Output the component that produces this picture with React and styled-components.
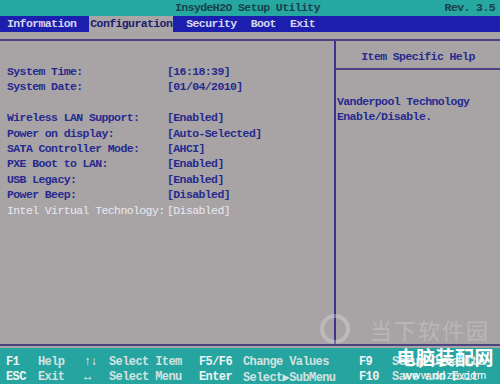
import React from "react";
import styled, { createGlobalStyle } from "styled-components";

const Global = createGlobalStyle`
  html, body { margin: 0; padding: 0; background: #a8a4a5; }
  body { width: 500px; height: 384px; overflow: hidden; }
  #root { width: 500px; height: 384px; }
`;

const font = `"Liberation Mono", "DejaVu Sans Mono", monospace`;

const Screen = styled.div`
  position: relative;
  width: 500px;
  height: 384px;
  display: flex;
  flex-direction: column;
  background: #a8a4a5;
  font-family: ${font};
  font-size: 11.5px;
  font-weight: bold;
  letter-spacing: -0.6px;
  overflow: hidden;
`;

const TitleBar = styled.div`
  height: 16px;
  background: #27a7a1;
  color: #17424a;
  display: grid;
  grid-template-columns: 1fr auto 1fr;
  align-items: center;
  padding: 0 5px 0 0;
  line-height: 16px;
`;

const Title = styled.span`
  grid-column: 2;
`;

const Rev = styled.span`
  grid-column: 3;
  justify-self: end;
`;

const MenuBar = styled.div`
  height: 16px;
  background: #1c1eae;
  display: flex;
  align-items: stretch;
  gap: 12px;
  padding-left: 6px;
  line-height: 16px;
`;

const MenuItem = styled.span`
  padding: 0 1px;
  color: ${(p) => (p.$active ? "#1a1d6e" : "#d6d8f0")};
  background: ${(p) => (p.$active ? "#aaa6a7" : "transparent")};
`;

const Main = styled.div`
  flex: 1;
  display: flex;
  flex-direction: column;
  padding-top: 7px;
  padding-bottom: 2px;
`;

const Frame = styled.div`
  flex: 1;
  display: grid;
  grid-template-columns: 336px 1fr;
  border-top: 2px solid #4b4380;
  border-bottom: 2px solid #4b4380;
`;

const LeftPanel = styled.div`
  border-right: 2px solid #3a3490;
  padding: 23px 0 0 7px;
  display: flex;
  flex-direction: column;
`;

const Row = styled.div`
  display: grid;
  grid-template-columns: 160px auto;
  height: 15.4px;
  line-height: 15.4px;
  color: ${(p) => (p.$selected ? "#e9e9f2" : "#262a8e")};
  font-weight: ${(p) => (p.$selected ? "normal" : "bold")};
`;

const Spacer = styled.div`
  height: 15.4px;
`;

const RightPanel = styled.div`
  display: flex;
  flex-direction: column;
`;

const HelpHead = styled.div`
  height: 29px;
  border-bottom: 2px solid #4b4380;
  display: flex;
  align-items: center;
  justify-content: center;
  color: #262a8e;
  padding-top: 4px;
  box-sizing: border-box;
`;

const HelpBody = styled.div`
  padding: 24px 0 0 1px;
  color: #262a8e;
  line-height: 15.4px;
`;

const Footer = styled.div`
  height: 36px;
  background: #26a49f;
  display: grid;
  grid-template-columns: 32px 46px 25px 90px 44px 116px 33px auto;
  grid-auto-rows: 15px;
  align-content: start;
  padding-left: 6px;
  padding-top: 7px;
  box-sizing: border-box;
  color: #e4ecec;
  font-size: 12px;
`;

const Key = styled.span`
  color: #eef4f4;
`;

const Desc = styled.span`
  color: #d4e2e1;
  white-space: nowrap;
`;

const Watermark = styled.div`
  position: absolute;
  right: 6px;
  bottom: 2px;
  display: flex;
  flex-direction: column;
  align-items: center;
  color: #ffffff;
  font-family: "Noto Sans CJK SC", "Liberation Sans", sans-serif;
  letter-spacing: 0;
  pointer-events: none;
`;

const WmBig = styled.span`
  font-size: 19px;
  font-weight: bold;
  line-height: 23px;
  letter-spacing: 0.5px;
`;

const WmSmall = styled.span`
  font-family: "Liberation Sans", sans-serif;
  font-size: 11px;
  font-weight: normal;
  line-height: 14px;
  letter-spacing: 0.8px;
`;

const FaintMark = styled.div`
  position: absolute;
  left: 318px;
  top: 312px;
  display: flex;
  align-items: center;
  gap: 18px;
  color: rgba(230, 228, 228, 0.3);
  font-family: "Noto Sans CJK SC", sans-serif;
  font-size: 22px;
  font-weight: normal;
  letter-spacing: 2px;
  pointer-events: none;
`;

const rows = [
  ["System Time:", "[16:18:39]"],
  ["System Date:", "[01/04/2010]"],
  null,
  ["Wireless LAN Support:", "[Enabled]"],
  ["Power on display:", "[Auto-Selected]"],
  ["SATA Controller Mode:", "[AHCI]"],
  ["PXE Boot to LAN:", "[Enabled]"],
  ["USB Legacy:", "[Enabled]"],
  ["Power Beep:", "[Disabled]"],
  ["Intel Virtual Technology:", "[Disabled]", true],
];

const footer = [
  ["F1", "Help", "↑↓", "Select Item", "F5/F6", "Change Values", "F9", "Setup Defaults"],
  ["ESC", "Exit", "↔", "Select Menu", "Enter", "Select▶SubMenu", "F10", "Save and Exit"],
];

export default function App() {
  return (
    <Screen>
      <Global />
      <TitleBar>
        <Title>InsydeH2O Setup Utility</Title>
        <Rev>Rev. 3.5</Rev>
      </TitleBar>
      <MenuBar>
        <MenuItem>Information</MenuItem>
        <MenuItem $active>Configuration</MenuItem>
        <MenuItem>Security</MenuItem>
        <MenuItem>Boot</MenuItem>
        <MenuItem>Exit</MenuItem>
      </MenuBar>
      <Main>
        <Frame>
          <LeftPanel>
            {rows.map((r, i) =>
              r ? (
                <Row key={i} $selected={r[2]}>
                  <span>{r[0]}</span>
                  <span>{r[1]}</span>
                </Row>
              ) : (
                <Spacer key={i} />
              )
            )}
          </LeftPanel>
          <RightPanel>
            <HelpHead>Item Specific Help</HelpHead>
            <HelpBody>
              Vanderpool Technology
              <br />
              Enable/Disable.
            </HelpBody>
          </RightPanel>
        </Frame>
      </Main>
      <Footer>
        {footer.map((line) =>
          line.map((t, j) =>
            j % 2 === 0 ? <Key key={t}>{t}</Key> : <Desc key={t}>{t}</Desc>
          )
        )}
      </Footer>
      <FaintMark>
        <svg width="34" height="34" viewBox="0 0 34 34">
          <circle cx="17" cy="17" r="13" fill="none" stroke="rgba(230,228,228,0.35)" strokeWidth="4" />
        </svg>
        <span>当下软件园</span>
      </FaintMark>
      <Watermark>
        <WmBig>电脑装配网</WmBig>
        <WmSmall>www.dnzp.com</WmSmall>
      </Watermark>
    </Screen>
  );
}
